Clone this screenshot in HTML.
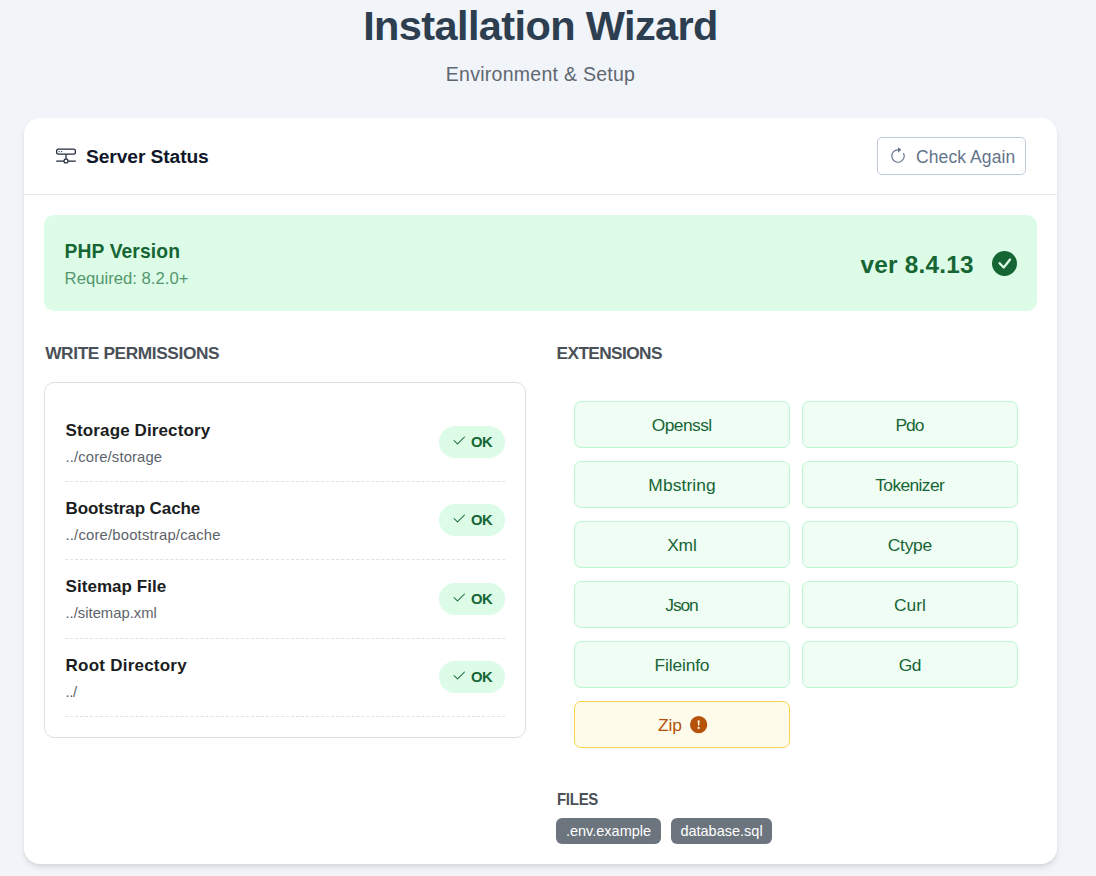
<!DOCTYPE html>
<html lang="en">
<head>
<meta charset="utf-8">
<title>Installation Wizard</title>
<style>
*{box-sizing:border-box;margin:0;padding:0}
html,body{width:1096px;height:876px;overflow:hidden}
body{background:#f1f4f9;font-family:"Liberation Sans",sans-serif;color:#212529;position:relative}
.title{position:absolute;left:0;width:1081px;top:2px;text-align:center;font-weight:bold;font-size:41.5px;line-height:48px;letter-spacing:-0.61px;color:#2c3e50;white-space:nowrap}
.subtitle{position:absolute;left:0;width:1081px;top:62.4px;text-align:center;font-size:19.5px;line-height:24px;letter-spacing:0.27px;color:#5f6770;white-space:nowrap}
.card{position:absolute;left:24px;top:118px;width:1033px;height:746px;background:#fff;border-radius:16px;box-shadow:0 4px 6px -1px rgba(0,0,0,.1),0 2px 4px -1px rgba(0,0,0,.06)}
.card-head{position:absolute;left:0;top:0;width:100%;height:77px;border-bottom:1px solid #e6e8ee}
.card-head h2{position:absolute;left:62px;top:27.3px;letter-spacing:-0.08px;font-size:19.2px;line-height:24px;font-weight:bold;color:#0f172a;white-space:nowrap}
.card-head svg.ico{position:absolute;left:31.5px;top:27.7px;width:20px;height:20px}
.btn{font-family:"Liberation Sans",sans-serif;cursor:pointer;position:absolute;left:853px;top:19px;width:149px;height:38px;border:1px solid #c0cad8;border-radius:5px;background:#fff;color:#64748b;font-size:17.5px;letter-spacing:0.1px;line-height:36px;white-space:nowrap}
.btn svg{position:absolute;left:10.6px;top:8.9px;width:18px;height:18px}
.btn span{position:absolute;left:38px;top:1px}
.php{position:absolute;left:20px;top:97px;width:993px;height:96px;background:#dcfce7;border-radius:10px}
.php .t{position:absolute;left:20.6px;top:24.5px;font-size:19.3px;letter-spacing:0.1px;line-height:24px;font-weight:bold;color:#166534;white-space:nowrap}
.php .s{position:absolute;left:20.6px;top:52.2px;font-size:16.7px;line-height:24px;color:#55966f;white-space:nowrap}
.php .v{position:absolute;right:63.3px;top:33.6px;font-size:24.3px;letter-spacing:0.24px;line-height:32px;font-weight:bold;color:#166534;white-space:nowrap}
.php svg{position:absolute;left:948px;top:35.8px;width:25px;height:25px}
.sec{position:absolute;font-size:17.3px;line-height:24px;font-weight:bold;color:#495057;white-space:nowrap}
.perm{position:absolute;left:20px;top:264px;width:482px;height:356px;border:1px solid #dcdfe4;border-radius:10px}
.row{position:absolute;left:20px;width:440px;height:78.33px;border-bottom:1px dashed #dbe2ec}
.row .n{position:absolute;left:0.6px;top:14.8px;font-size:17px;line-height:24px;font-weight:bold;color:#1a1d21;white-space:nowrap}
.row .p{position:absolute;left:0.5px;top:42.8px;font-size:14.8px;line-height:20px;color:#5c636a;white-space:nowrap}
.ok{position:absolute;right:0;top:22px;width:66px;height:32.4px;border-radius:16px;background:#dcfce7;color:#166534;font-weight:bold;font-size:14.8px;line-height:32px}
.ok svg{position:absolute;left:12.2px;top:7.3px;width:16px;height:16px}
.ok span{position:absolute;left:32px;top:0px;letter-spacing:-0.6px}
.ext{position:absolute;width:216px;height:47px;border:1px solid #bbf7d0;border-radius:7px;background:#f0fdf4;color:#166534;font-size:17.4px;line-height:45px;padding-top:0.5px;text-align:center;white-space:nowrap}
.ext.warn{background:#fffbeb;border-color:#fcd34d;color:#b45309}
.ext.warn svg{display:inline-block;vertical-align:-3px;margin-left:8.4px;width:17.3px;height:17.3px;margin-right:-1.5px}
.badge{position:absolute;top:700px;height:26px;border-radius:6px;background:#6c757d;color:#fff;font-size:14.5px;line-height:26px;text-align:center;white-space:nowrap}
</style>
</head>
<body>
<h1 class="title">Installation Wizard</h1>
<p class="subtitle">Environment &amp; Setup</p>
<main class="card">
  <header class="card-head">
    <svg class="ico" viewBox="0 0 16 16" fill="#1e293b"><path d="M4.5 5a.5.5 0 1 0 0-1 .5.5 0 0 0 0 1M3 4.5a.5.5 0 1 1-1 0 .5.5 0 0 1 1 0"/><path d="M0 4a2 2 0 0 1 2-2h12a2 2 0 0 1 2 2v1a2 2 0 0 1-2 2H8.5v3a1.5 1.5 0 0 1 1.5 1.5h5.5a.5.5 0 0 1 0 1H10A1.5 1.5 0 0 1 8.5 14h-1A1.5 1.5 0 0 1 6 12.500H.5a.5.5 0 0 1 0-1H6A1.5 1.5 0 0 1 7.500 10V7H2a2 2 0 0 1-2-2zm1 0v1a1 1 0 0 0 1 1h12a1 1 0 0 0 1-1V4a1 1 0 0 0-1-1H2a1 1 0 0 0-1 1m6 7.500v1a.5.5 0 0 0 .5.5h1a.5.5 0 0 0 .5-.5v-1a.5.5 0 0 0-.5-.5h-1a.5.5 0 0 0-.5.5"/></svg>
    <h2>Server Status</h2>
    <button class="btn"><svg viewBox="0 0 16 16" fill="#64748b"><path fill-rule="evenodd" d="M8 3a5 5 0 1 0 4.546 2.914.5.5 0 0 1 .908-.417A6 6 0 1 1 8 2z"/><path d="M8 4.466V.534a.25.25 0 0 1 .41-.192l2.360 1.966c.12.1.12.284 0 .384L8.410 4.658A.25.25 0 0 1 8 4.466"/></svg><span>Check Again</span></button>
  </header>
  <section class="php">
    <div class="t">PHP Version</div>
    <div class="s">Required: 8.2.0+</div>
    <div class="v">ver 8.4.13</div>
    <svg viewBox="0 0 16 16" fill="#166534"><path d="M16 8A8 8 0 1 1 0 8a8 8 0 0 1 16 0m-3.970-3.030a.75.75 0 0 0-1.080.022L7.477 9.417 5.384 7.323a.75.75 0 0 0-1.060 1.060L6.970 11.030a.75.75 0 0 0 1.079-.020l3.992-4.990a.75.75 0 0 0-.010-1.050z"/></svg>
  </section>
  <h3 class="sec" style="left:21.2px;top:223px;letter-spacing:-0.38px">WRITE PERMISSIONS</h3>
  <section class="perm">
    <div class="row" style="top:21px"><div class="n" style="letter-spacing:.12px">Storage Directory</div><div class="p" style="letter-spacing:.14px">../core/storage</div><div class="ok"><svg viewBox="0 0 16 16" fill="#166534"><path d="M13.854 3.646a.5.5 0 0 1 0 .708l-7 7a.5.5 0 0 1-.708 0l-3.500-3.500a.5.5 0 1 1 .708-.708L6.500 10.293l6.646-6.647a.5.5 0 0 1 .708 0"/></svg><span>OK</span></div></div>
    <div class="row" style="top:99.1px"><div class="n" style="letter-spacing:-.1px">Bootstrap Cache</div><div class="p" style="letter-spacing:.2px">../core/bootstrap/cache</div><div class="ok"><svg viewBox="0 0 16 16" fill="#166534"><path d="M13.854 3.646a.5.5 0 0 1 0 .708l-7 7a.5.5 0 0 1-.708 0l-3.500-3.500a.5.5 0 1 1 .708-.708L6.500 10.293l6.646-6.647a.5.5 0 0 1 .708 0"/></svg><span>OK</span></div></div>
    <div class="row" style="top:177.67px"><div class="n" style="letter-spacing:.04px">Sitemap File</div><div class="p" style="letter-spacing:0px">../sitemap.xml</div><div class="ok"><svg viewBox="0 0 16 16" fill="#166534"><path d="M13.854 3.646a.5.5 0 0 1 0 .708l-7 7a.5.5 0 0 1-.708 0l-3.500-3.500a.5.5 0 1 1 .708-.708L6.500 10.293l6.646-6.647a.5.5 0 0 1 .708 0"/></svg><span>OK</span></div></div>
    <div class="row" style="top:256px"><div class="n" style="letter-spacing:.23px">Root Directory</div><div class="p" style="letter-spacing:-.3px">../</div><div class="ok"><svg viewBox="0 0 16 16" fill="#166534"><path d="M13.854 3.646a.5.5 0 0 1 0 .708l-7 7a.5.5 0 0 1-.708 0l-3.500-3.500a.5.5 0 1 1 .708-.708L6.500 10.293l6.646-6.647a.5.5 0 0 1 .708 0"/></svg><span>OK</span></div></div>
  </section>
  <h3 class="sec" style="left:532.6px;top:223px;letter-spacing:-0.62px">EXTENSIONS</h3>
  <div class="ext" style="left:550px;top:283px"><span style="letter-spacing:-0.57px;margin-right:0.57px">Openssl</span></div>
  <div class="ext" style="left:778px;top:283px"><span style="letter-spacing:-1.0px;margin-right:1.0px">Pdo</span></div>
  <div class="ext" style="left:550px;top:343px"><span style="letter-spacing:0.1px;margin-right:-0.1px">Mbstring</span></div>
  <div class="ext" style="left:778px;top:343px"><span style="letter-spacing:-0.62px;margin-right:0.62px">Tokenizer</span></div>
  <div class="ext" style="left:550px;top:403px"><span style="letter-spacing:-0.2px;margin-right:0.2px">Xml</span></div>
  <div class="ext" style="left:778px;top:403px"><span style="letter-spacing:-0.25px;margin-right:0.25px">Ctype</span></div>
  <div class="ext" style="left:550px;top:463px"><span style="letter-spacing:-1.1px;margin-right:1.1px">Json</span></div>
  <div class="ext" style="left:778px;top:463px"><span style="letter-spacing:0.0px;margin-right:-0.0px">Curl</span></div>
  <div class="ext" style="left:550px;top:523px"><span style="letter-spacing:-0.14px;margin-right:0.14px">Fileinfo</span></div>
  <div class="ext" style="left:778px;top:523px"><span style="letter-spacing:-0.6px;margin-right:0.6px">Gd</span></div>
  <div class="ext warn" style="left:550px;top:583px"><span style="letter-spacing:-.1px">Zip</span><svg viewBox="0 0 16 16" fill="#b45309"><path d="M16 8A8 8 0 1 1 0 8a8 8 0 0 1 16 0M8 4a.905.905 0 0 0-.9.995l.35 3.507a.552.552 0 0 0 1.100 0l.35-3.507A.905.905 0 0 0 8 4m.002 6a1 1 0 1 0 0 2 1 1 0 0 0 0-2"/></svg></div>
  <span class="badge" style="left:532px;width:105px">.env.example</span>
  <span class="badge" style="left:647px;width:101px">database.sql</span>
  <h3 class="sec" style="left:532.6px;top:669px;letter-spacing:-0.3px;transform:scaleX(.865);transform-origin:0 50%">FILES</h3>
</main>
</body>
</html>
